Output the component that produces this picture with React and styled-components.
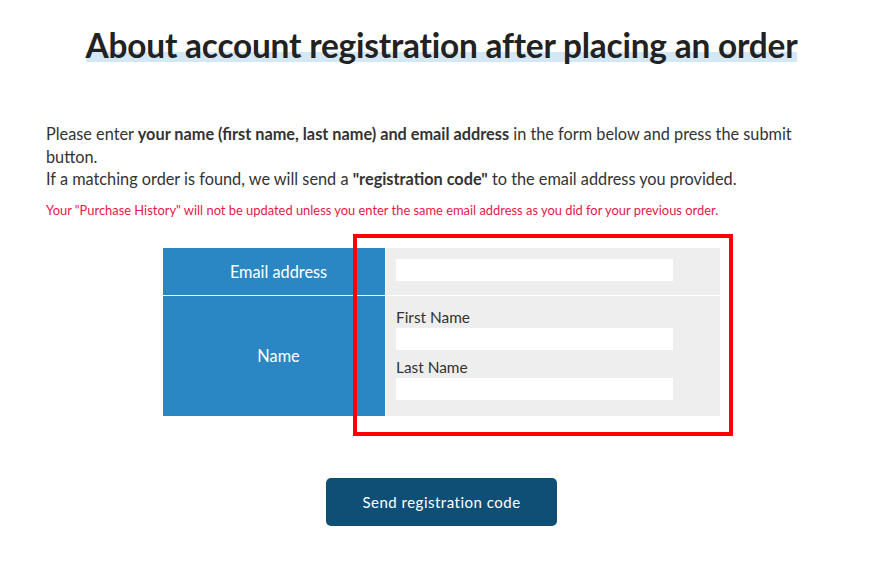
import React from "react";
import styled, { createGlobalStyle } from "styled-components";

const Global = createGlobalStyle`
  html, body { margin: 0; padding: 0; background: #fff; }
  body { font-family: "Lato", "Noto Sans", sans-serif; color: #333; }
  * { box-sizing: border-box; }
`;

const Page = styled.div`
  position: relative;
  width: 869px;
  height: 568px;
  overflow: hidden;
  padding: 24px 32px 0 46px;
`;

const Title = styled.h1`
  margin: 0;
  text-align: center;
  font-size: 33.4px;
  font-weight: 700;
  line-height: 42px;
  color: #222;
  letter-spacing: -0.2px;
`;

const Marker = styled.span`
  background: linear-gradient(transparent 68%, #d4e7f4 68%, #d4e7f4 92%, transparent 92%);
`;

const Intro = styled.p`
  margin: 57px 0 0;
  font-size: 16.3px;
  line-height: 22.5px;
  color: #333;
`;

const Note = styled.p`
  margin: 10px 0 0;
  font-size: 12.9px;
  line-height: 18px;
  color: #e8174a;
`;

const Table = styled.div`
  width: 557px;
  margin: 29px auto 0;
  display: grid;
  grid-template-columns: 222px 1fr;
  row-gap: 1px;
  column-gap: 1px;
`;

const Head = styled.div`
  background: #2b87c3;
  color: #fff;
  font-size: 16.3px;
  display: flex;
  align-items: center;
  justify-content: center;
  padding-left: 9px;
  height: ${(p) => p.$h}px;
`;

const Cell = styled.div`
  background: #eeeeee;
  padding: ${(p) => p.$pad};
  display: flex;
  flex-direction: column;
`;

const Label = styled.label`
  font-size: 15.4px;
  line-height: 20px;
  color: #333;
  margin-bottom: 1px;
`;

const Input = styled.input`
  width: 277px;
  height: 22px;
  border: none;
  background: #fff;
  margin-bottom: ${(p) => p.$mb || 0}px;
  outline: none;
`;

const ButtonRow = styled.div`
  display: flex;
  justify-content: center;
  margin-top: 62px;
`;

const Button = styled.button`
  width: 231px;
  height: 48px;
  border: none;
  border-radius: 5px;
  background: #0f4f75;
  color: #fff;
  font-family: "Lato", "Noto Sans", sans-serif;
  font-size: 15px;
  letter-spacing: 0.5px;
  cursor: pointer;
`;

const Highlight = styled.div`
  position: absolute;
  left: 353px;
  top: 234px;
  width: 380px;
  height: 202px;
  border: 4px solid #ff0000;
  pointer-events: none;
`;

export default function App() {
  return (
    <>
      <Global />
      <Page>
        <Title>
          <Marker>About account registration after placing an order</Marker>
        </Title>
        <Intro>
          Please enter <b>your name (first name, last name) and email address</b> in the form below and press the submit button.
          <br />
          If a matching order is found, we will send a <b>"registration code"</b> to the email address you provided.
        </Intro>
        <Note>
          Your "Purchase History" will not be updated unless you enter the same email address as you did for your previous order.
        </Note>
        <Table>
          <Head $h={47}>Email address</Head>
          <Cell $pad="11px 10px 0">
            <Input type="email" />
          </Cell>
          <Head $h={120}>Name</Head>
          <Cell $pad="11px 10px 0">
            <Label>First Name</Label>
            <Input $mb={7} />
            <Label>Last Name</Label>
            <Input />
          </Cell>
        </Table>
        <ButtonRow>
          <Button>Send registration code</Button>
        </ButtonRow>
        <Highlight />
      </Page>
    </>
  );
}
